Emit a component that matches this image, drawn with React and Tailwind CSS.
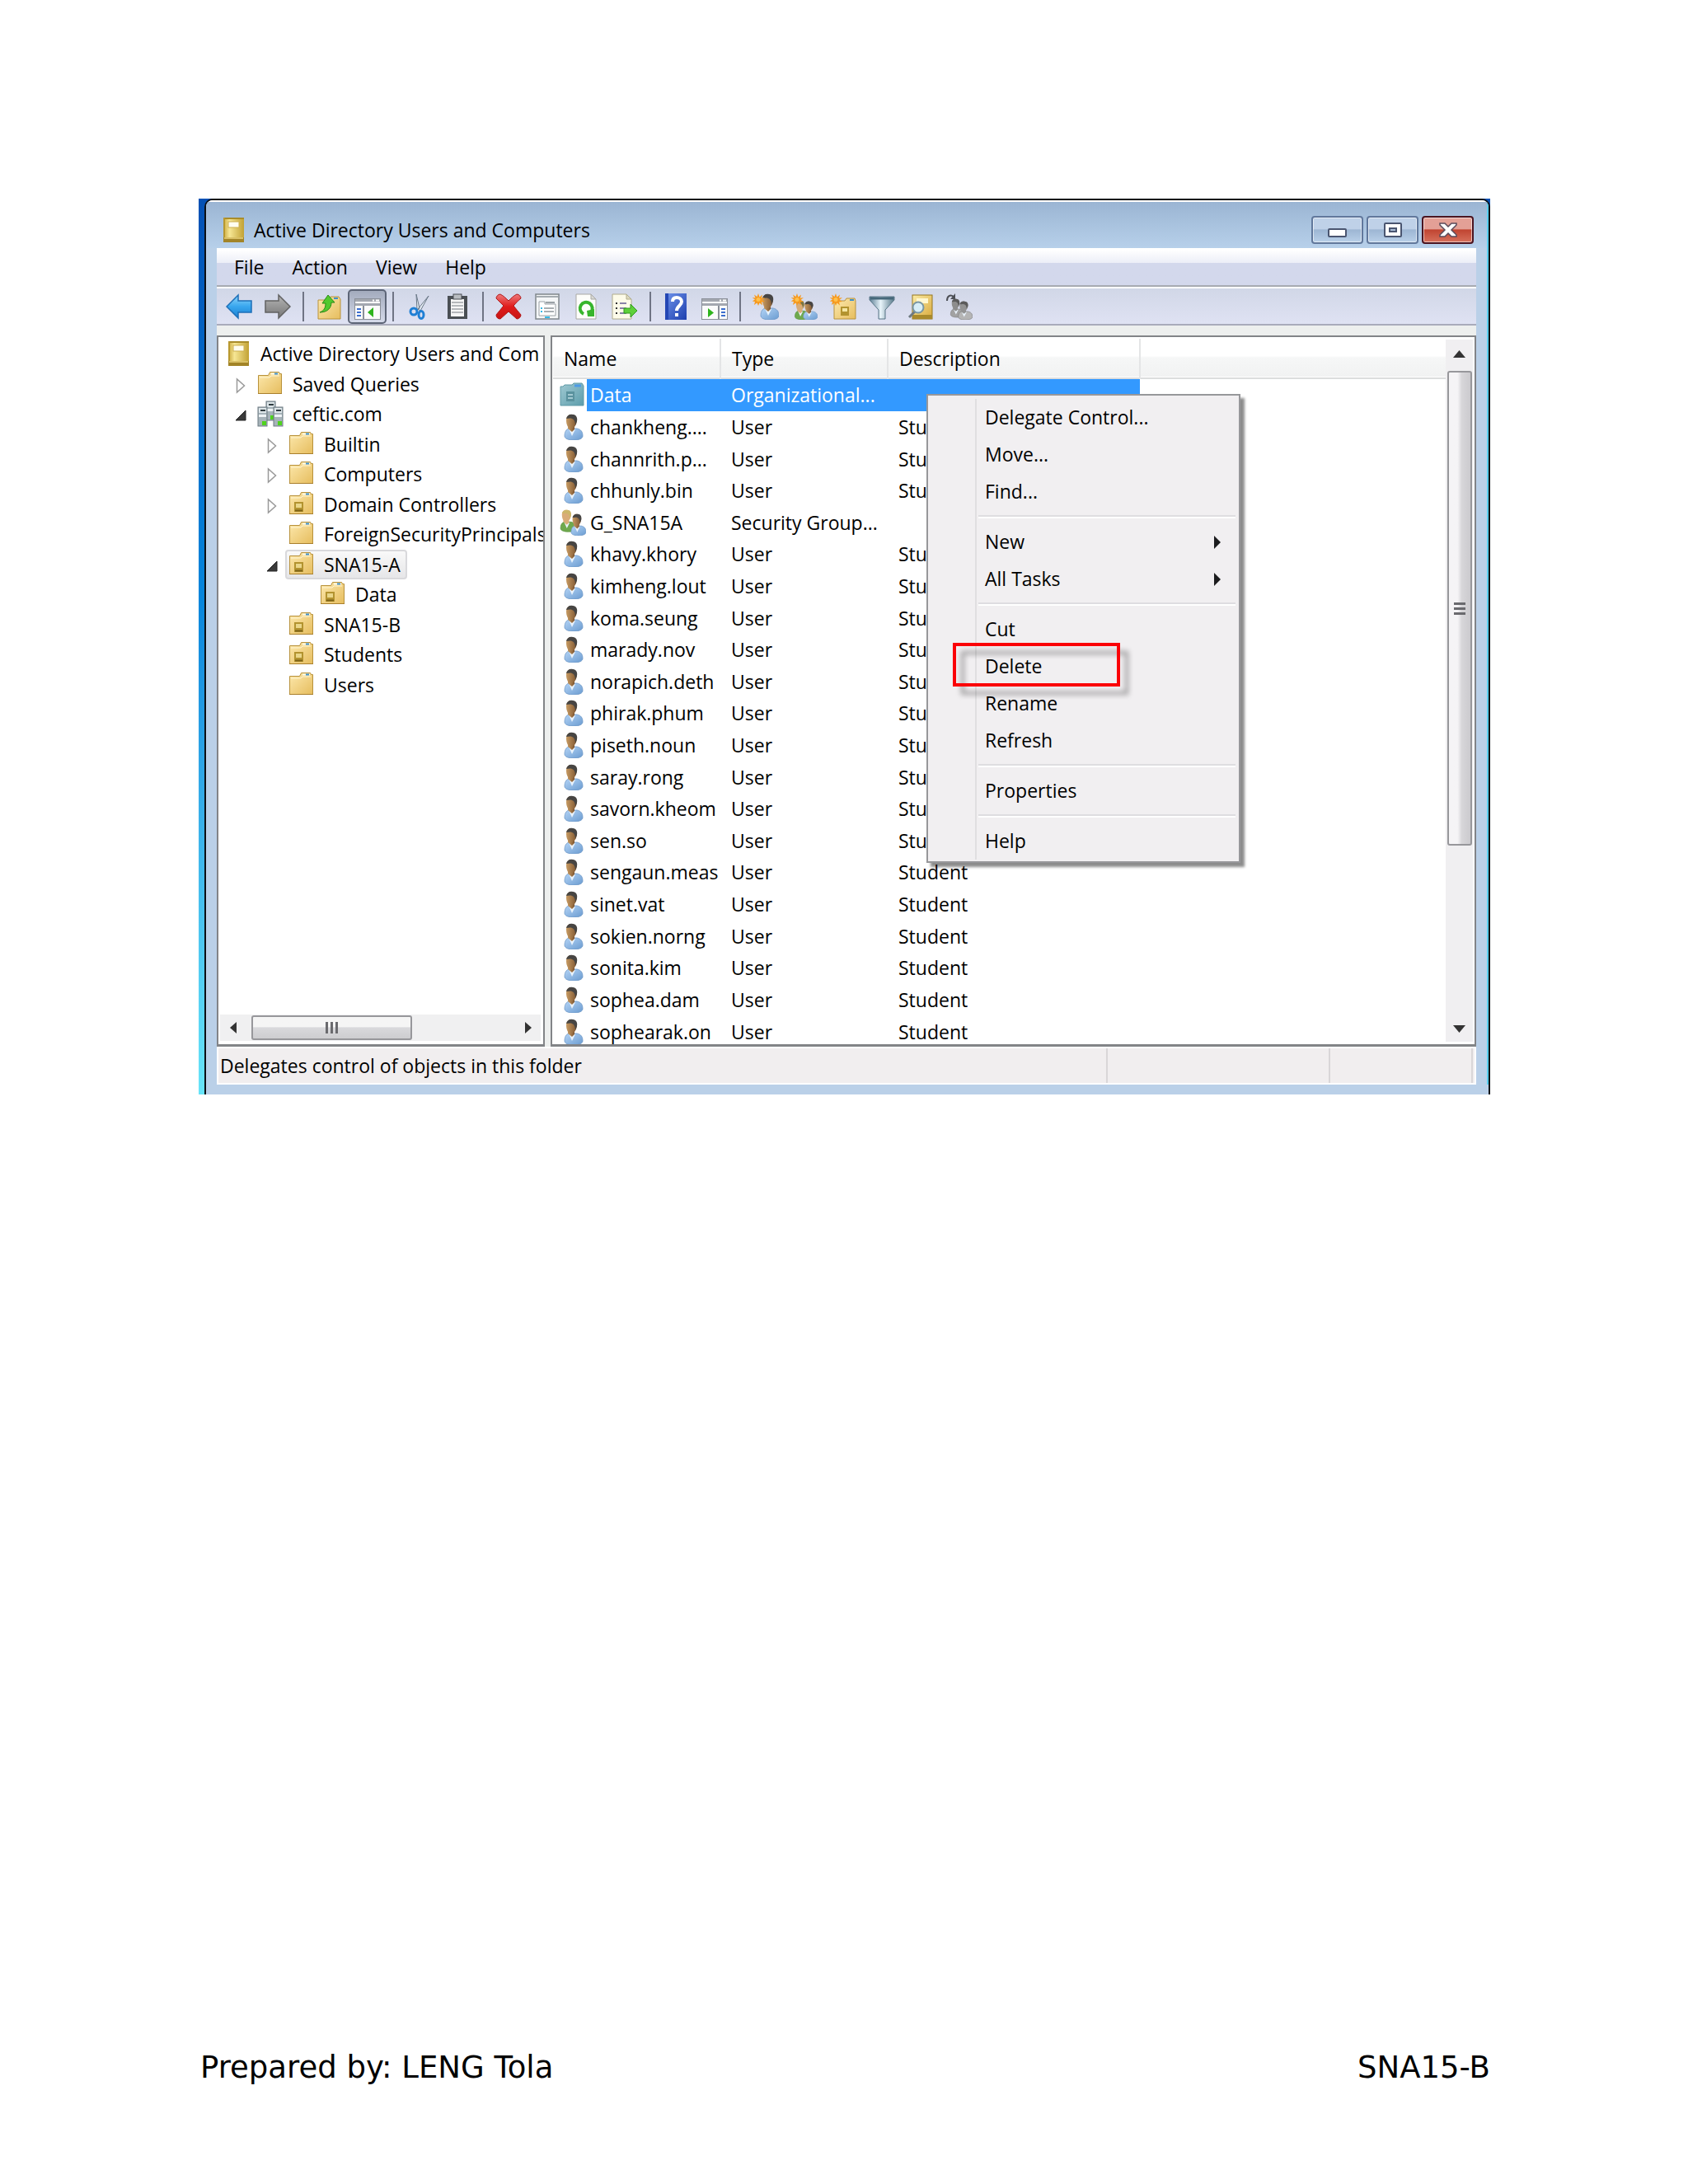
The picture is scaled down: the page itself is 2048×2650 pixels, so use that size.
import { useState } from "react";

const TREE = [
  { label: "Active Directory Users and Com", icon: "book", depth: 0 },
  { label: "Saved Queries", icon: "folder", depth: 1, toggle: "closed" },
  { label: "ceftic.com", icon: "domain", depth: 1, toggle: "open" },
  { label: "Builtin", icon: "folder", depth: 2, toggle: "closed" },
  { label: "Computers", icon: "folder", depth: 2, toggle: "closed" },
  { label: "Domain Controllers", icon: "unit", depth: 2, toggle: "closed" },
  { label: "ForeignSecurityPrincipals", icon: "folder", depth: 2 },
  { label: "SNA15-A", icon: "unit", depth: 2, toggle: "open" },
  { label: "Data", icon: "unit", depth: 3 },
  { label: "SNA15-B", icon: "unit", depth: 2 },
  { label: "Students", icon: "unit", depth: 2 },
  { label: "Users", icon: "folder", depth: 2 },
];

const INDENT = {
  0: "pl-2",
  1: "pl-2",
  2: "pl-[46px]",
  3: "pl-[84px]",
};

const USERS_BEFORE_GROUP = ["chankheng....", "channrith.p...", "chhunly.bin"];
const USERS_AFTER_GROUP = [
  "khavy.khory",
  "kimheng.lout",
  "koma.seung",
  "marady.nov",
  "norapich.deth",
  "phirak.phum",
  "piseth.noun",
  "saray.rong",
  "savorn.kheom",
  "sen.so",
  "sengaun.meas",
  "sinet.vat",
  "sokien.norng",
  "sonita.kim",
  "sophea.dam",
  "sophearak.on",
];

function toUser(name) {
  return { name, type: "User", description: "Student", icon: "user" };
}

const ROWS = [
  { name: "Data", type: "Organizational...", description: "", icon: "unitSelected" },
  ...USERS_BEFORE_GROUP.map(toUser),
  { name: "G_SNA15A", type: "Security Group...", description: "", icon: "group" },
  ...USERS_AFTER_GROUP.map(toUser),
];

const MENU_GROUPS = [
  [{ label: "Delegate Control..." }, { label: "Move..." }, { label: "Find..." }],
  [{ label: "New", submenu: true }, { label: "All Tasks", submenu: true }],
  [
    { label: "Cut" },
    { label: "Delete", marked: true },
    { label: "Rename" },
    { label: "Refresh" },
  ],
  [{ label: "Properties" }],
  [{ label: "Help" }],
];

const TOOL_GROUPS = [
  ["back", "forward"],
  ["up", "pane"],
  ["cut", "paste"],
  ["remove", "properties", "refresh", "export"],
  ["help", "actionPane"],
  ["newUser", "newGroup", "newUnit", "filter", "find", "addToGroup"],
];

const TOOL_LABELS = {
  back: "Back",
  forward: "Forward",
  up: "Up one level",
  pane: "Show or hide console tree",
  cut: "Cut",
  paste: "Paste",
  remove: "Delete",
  properties: "Properties",
  refresh: "Refresh",
  export: "Export list",
  help: "Help",
  actionPane: "Show or hide action pane",
  newUser: "Create a new user",
  newGroup: "Create a new group",
  newUnit: "Create a new organizational unit",
  filter: "Filter options",
  find: "Find objects",
  addToGroup: "Add to a group",
};

/* ---------- icon parts, all on a 32 x 32 grid ---------- */

function Defs() {
  return (
    <svg className="absolute size-0" aria-hidden="true">
      <defs>
        <linearGradient id="gold" x1="0" y1="0" x2="1" y2="1">
          <stop offset="0" stopColor="#fbeca6" />
          <stop offset="1" stopColor="#d9a93c" />
        </linearGradient>
        <linearGradient id="manila" x1="0" y1="0" x2="1" y2="1">
          <stop offset="0" stopColor="#fde9ae" />
          <stop offset="1" stopColor="#e6bd5e" />
        </linearGradient>
        <linearGradient id="bookBody" x1="0" y1="0" x2="1" y2="0">
          <stop offset="0" stopColor="#c9a83c" />
          <stop offset="0.3" stopColor="#f6e694" />
          <stop offset="1" stopColor="#c2a234" />
        </linearGradient>
        <linearGradient id="teal" x1="0" y1="0" x2="1" y2="1">
          <stop offset="0" stopColor="#a0c9d2" />
          <stop offset="1" stopColor="#5c9dab" />
        </linearGradient>
        <linearGradient id="skin" x1="0" y1="0" x2="1" y2="0">
          <stop offset="0" stopColor="#c79a62" />
          <stop offset="1" stopColor="#7d5530" />
        </linearGradient>
        <linearGradient id="shirt" x1="0" y1="0" x2="1" y2="1">
          <stop offset="0" stopColor="#b4d4f6" />
          <stop offset="1" stopColor="#6a9bd0" />
        </linearGradient>
        <linearGradient id="sky" x1="0" y1="0" x2="0" y2="1">
          <stop offset="0" stopColor="#8fd6fb" />
          <stop offset="0.5" stopColor="#38a6ee" />
          <stop offset="1" stopColor="#1b7fd0" />
        </linearGradient>
        <linearGradient id="steel" x1="0" y1="0" x2="0" y2="1">
          <stop offset="0" stopColor="#b5b5b5" />
          <stop offset="1" stopColor="#767676" />
        </linearGradient>
        <linearGradient id="cross" x1="0" y1="0" x2="0" y2="1">
          <stop offset="0" stopColor="#ee7a7a" />
          <stop offset="0.5" stopColor="#e01c1c" />
          <stop offset="1" stopColor="#c81414" />
        </linearGradient>
        <linearGradient id="funnel" x1="0" y1="0" x2="1" y2="0">
          <stop offset="0" stopColor="#5d7f95" />
          <stop offset="0.45" stopColor="#e8f4fa" />
          <stop offset="1" stopColor="#567889" />
        </linearGradient>
        <linearGradient id="helpBlue" x1="0" y1="0" x2="1" y2="1">
          <stop offset="0" stopColor="#6f93ea" />
          <stop offset="1" stopColor="#1d3fae" />
        </linearGradient>
      </defs>
    </svg>
  );
}

function Svg({ children, className = "size-8 shrink-0" }) {
  return (
    <svg viewBox="0 0 32 32" className={className} aria-hidden="true">
      {children}
    </svg>
  );
}

function BookShape() {
  return (
    <>
      <rect x="4" y="1" width="25" height="30" fill="url(#bookBody)" />
      <rect x="4" y="1" width="25" height="2" fill="#a98c2a" />
      <rect x="4" y="1" width="2" height="30" fill="#b8982f" />
      <rect x="10" y="6" width="13" height="7" fill="#fffdf0" stroke="#cdb050" />
      <rect x="4" y="25" width="25" height="6" fill="#a28427" />
      <rect x="5" y="25" width="23" height="2" fill="#d9c067" />
    </>
  );
}

function FolderShape() {
  return (
    <>
      <path d="M1.500 5.500h12l2-4h11l1 2h2v24h-28z" fill="url(#manila)" stroke="#b8923c" />
      <path d="M3 8h12l2-2h10" fill="none" stroke="#fff6d4" />
      <path d="M17 3.500h9" stroke="#fffbe8" strokeWidth="2" />
      <path d="M21 3.500h4" stroke="#3f90c8" strokeWidth="2" />
      <path d="M1 27.500h29" stroke="#a97f2c" />
    </>
  );
}

function UnitMark() {
  return (
    <>
      <rect x="7" y="13" width="11" height="12" fill="#b3932f" />
      <rect x="9" y="15" width="7" height="5" fill="#e9d68a" />
      <path d="M8 23.500h9" stroke="#7d6218" strokeWidth="2" />
    </>
  );
}

function PersonShape({
  shirt = "url(#shirt)",
  skin = "url(#skin)",
  hair = "#474543",
  edge = "#6f98c6",
}) {
  return (
    <>
      <path
        d="M6 27c0-5 2-8 5-9h10c5 1 7 4 7 9 0 3-4 5-11 5S6 30 6 27z"
        fill={shirt}
        stroke={edge}
        strokeWidth="0.8"
      />
      <path d="M11 18l4 9 4-8z" fill="#eaf3fc" />
      <path d="M10 14h8v5l-3 3-5-4z" fill={skin} />
      <path d="M8 8c0-4 2-7 6-7s7 3 7 7-3 10-7 10-6-5-6-10z" fill={skin} />
      <path d="M8 6c1-4 4-6 8-5 4 0 6 4 5 8l-2 5c0-4-1-7-4-8-2-1-5 0-7 0z" fill={hair} />
    </>
  );
}

function Burst() {
  return (
    <>
      <path
        d="M7 0l1.500 4.500L12 1.500l-1 4.300 4-.8-3.500 3L15 10l-4 .5 1 4-3.500-3L7 15l-1.500-3.500L2 14l1-4-3.500-.5L3 7.500-.5 5l4 .5L2 1.500 5.500 4z"
        fill="#f79a1e"
      />
      <circle cx="7" cy="7.500" r="2.500" fill="#ffc04a" />
    </>
  );
}

function ServerTower({ x, y }) {
  return (
    <g transform={`translate(${x} ${y})`}>
      <rect width="11" height="23" fill="#a6b3b9" stroke="#6d7b82" />
      <rect x="1" y="1" width="9" height="6" fill="#dde5e8" />
      <rect x="3" y="3" width="6" height="2" fill="#2f3b40" />
      <rect x="1" y="9" width="9" height="3" fill="#eef3f5" />
      <rect x="5" y="17" width="5" height="5" fill="#4fd31d" />
    </g>
  );
}

function PageShape() {
  return (
    <>
      <path d="M4 1h18l6 6v24H4z" fill="#fdfdfa" stroke="#a9a9a4" />
      <path d="M22 1v6h6z" fill="#d8d8d4" stroke="#a9a9a4" />
    </>
  );
}

function PaneWindow({ flip = false }) {
  return (
    <>
      <rect x="0.500" y="6.500" width="31" height="25" fill="#fbfbfb" stroke="#8a8f98" />
      <rect x="1" y="7" width="30" height="3" fill="#a4a8b0" />
      <path d="M22 8.500h2M26 8.500h4" stroke="#fff" strokeWidth="2" />
      <path d="M1 13.500h30" stroke="#a4a8b0" strokeWidth="3" />
      {flip ? (
        <>
          <path d="M21 15v16" stroke="#8a8f98" strokeWidth="2" />
          <path d="M24 19h5M24 23h5M24 27h5" stroke="#3c6ecf" strokeWidth="2" />
          <path d="M8 18v11l7-5.500z" fill="#2fb41d" />
        </>
      ) : (
        <>
          <path d="M11 15v16" stroke="#8a8f98" strokeWidth="2" />
          <path d="M3 19h5M3 23h5M3 27h5" stroke="#3c6ecf" strokeWidth="2" />
          <path d="M23 17v12l-7-6z" fill="#2fb41d" />
        </>
      )}
    </>
  );
}

const ICONS = {
  book: <BookShape />,
  folder: <FolderShape />,
  unit: (
    <>
      <FolderShape />
      <UnitMark />
    </>
  ),
  unitSelected: (
    <>
      <path d="M1 6h3l2-2h9l2-2h10l2 3v24H1z" fill="url(#teal)" stroke="#5e99a6" />
      <path d="M18 5h8" stroke="#4d9be6" strokeWidth="3" />
      <rect x="8" y="12" width="10" height="12" fill="#5a929e" />
      <path d="M10 16h6M10 20h6" stroke="#a3c9d1" strokeWidth="2" />
    </>
  ),
  domain: (
    <>
      <ServerTower x={11} y={1} />
      <ServerTower x={1} y={8} />
      <ServerTower x={20} y={8} />
    </>
  ),
  user: <PersonShape />,
  group: (
    <>
      <g transform="translate(-4 0) scale(0.850)">
        <PersonShape shirt="#6fa94e" skin="#d9ac78" hair="#cdb66a" edge="#55903a" />
      </g>
      <g transform="translate(9 5) scale(0.820 0.840)">
        <PersonShape />
      </g>
    </>
  ),
  back: (
    <path
      d="M1 16L15 2v7h16v14H15v7z"
      fill="url(#sky)"
      stroke="#1c6fb8"
      strokeWidth="1.500"
    />
  ),
  forward: (
    <path
      d="M31 16L17 2v7H1v14h16v7z"
      fill="url(#steel)"
      stroke="#626262"
      strokeWidth="1.500"
    />
  ),
  up: (
    <>
      <path d="M3 8h12l3-4h10l2 3v24H3z" fill="url(#manila)" stroke="#b8923c" />
      <path d="M22 6h5" stroke="#3f90c8" strokeWidth="2" />
      <path
        d="M5 23c5-2 7-5 7-11H8l7-10 8 9h-4c0 7-5 12-14 12z"
        fill="#52c92e"
        stroke="#2b8a17"
      />
    </>
  ),
  pane: <PaneWindow />,
  cut: (
    <>
      <path d="M13 1l4 17-3 2zM28 3L15 19l3 2z" fill="#e4ebf2" stroke="#6a7887" />
      <ellipse cx="10" cy="22" rx="4" ry="4" fill="none" stroke="#1f7fd4" strokeWidth="3" />
      <ellipse cx="19" cy="26" rx="3" ry="4.500" fill="none" stroke="#1f7fd4" strokeWidth="3" />
    </>
  ),
  paste: (
    <>
      <rect x="4" y="3" width="24" height="28" fill="#4a4f54" />
      <rect x="8" y="7" width="16" height="21" fill="#f6f6f6" />
      <rect x="11" y="1" width="10" height="6" fill="#b9bdc1" stroke="#4a4f54" />
      <path d="M9 11h14M9 15h14M9 19h14M9 23h14" stroke="#a0a4a8" strokeWidth="1.500" />
    </>
  ),
  remove: (
    <path
      d="M6 1c4 2 7 5 10 8 3-3 6-6 10-8 3 0 5 3 5 5-4 3-6 6-9 9 3 4 6 7 9 11 0 3-3 5-5 5-3-3-7-6-10-9-3 3-7 6-10 9-3 0-5-2-5-5 3-4 6-7 9-11-3-3-6-6-9-9 0-2 2-5 5-5z"
      fill="url(#cross)"
      stroke="#b01818"
    />
  ),
  properties: (
    <>
      <rect x="2" y="1" width="28" height="30" fill="#f4f6f7" stroke="#7f868b" strokeWidth="1.500" />
      <path d="M3 4h26" stroke="#a5abb0" strokeWidth="2" />
      <path d="M6 10h7v3h13v14H6z" fill="#fff" stroke="#9aa1a6" />
      <path d="M14 11h11" stroke="#9aa1a6" strokeWidth="2" />
      <path d="M12 18h12M12 22h12" stroke="#8c9499" strokeWidth="1.500" />
      <path d="M8 18h2M8 22h2" stroke="#35b9e6" strokeWidth="2" />
      <path d="M13 29h6" stroke="#35b9e6" strokeWidth="2" />
    </>
  ),
  refresh: (
    <>
      <PageShape />
      <path
        d="M13 25a7.500 7.500 0 1 1 9-2"
        fill="none"
        stroke="#37b52c"
        strokeWidth="4"
      />
      <path d="M17 21l9-2v9h-8z" fill="#37b52c" />
    </>
  ),
  export: (
    <>
      <path d="M1 1h17l6 6v24H1z" fill="#fdfbe9" stroke="#b0ac8c" />
      <path d="M18 1v6h6z" fill="#dedac0" stroke="#b0ac8c" />
      <path d="M5 12h2M5 18h2M5 24h2" stroke="#333" strokeWidth="2" />
      <path d="M10 12h8M10 18h8M10 24h8" stroke="#8a83a8" strokeWidth="2" />
      <path d="M15 18h8v-5l8 8-8 8v-5h-8z" fill="#5ed03a" stroke="#2f9a1d" />
    </>
  ),
  help: (
    <>
      <rect x="3" y="0" width="26" height="32" fill="url(#helpBlue)" />
      <rect x="3" y="0" width="4" height="32" fill="#2447b4" />
      <path
        d="M12 10c0-4 2-5 5-5s6 2 6 5c0 5-6 5-6 11"
        fill="none"
        stroke="#fff"
        strokeWidth="4"
      />
      <rect x="15" y="24" width="4" height="4" fill="#fff" />
    </>
  ),
  actionPane: <PaneWindow flip />,
  newUser: (
    <>
      <g transform="translate(4 0)">
        <PersonShape />
      </g>
      <Burst />
    </>
  ),
  newGroup: (
    <>
      <g transform="translate(0 8) scale(0.740)">
        <PersonShape shirt="#6fa94e" skin="#d9ac78" hair="#7d7442" edge="#55903a" />
      </g>
      <g transform="translate(10 9) scale(0.780 0.720)">
        <PersonShape />
      </g>
      <Burst />
    </>
  ),
  newUnit: (
    <>
      <path d="M5 9h13l2-3h10l1 3v22H5z" fill="url(#manila)" stroke="#b8923c" />
      <path d="M24 8h5" stroke="#3f90c8" strokeWidth="2" />
      <rect x="13" y="16" width="10" height="11" fill="#b3932f" />
      <rect x="15" y="18" width="6" height="4" fill="#f5e6a2" />
      <Burst />
    </>
  ),
  filter: (
    <>
      <path d="M1 4h30v4L20 20v11h-8V20L1 8z" fill="url(#funnel)" stroke="#587586" />
      <path d="M2 6h28" stroke="#46687a" strokeWidth="3" />
    </>
  ),
  find: (
    <>
      <rect x="6" y="2" width="24" height="29" fill="url(#gold)" stroke="#96761d" />
      <rect x="11" y="6" width="14" height="6" fill="#fff7cf" />
      <rect x="6" y="26" width="24" height="5" fill="#a98a2c" />
      <path d="M9 22l-7 7" stroke="#6f7a80" strokeWidth="3" />
      <circle cx="13" cy="17" r="6.500" fill="#d7eef7" stroke="#7a97a3" strokeWidth="2" />
    </>
  ),
  addToGroup: (
    <>
      <path d="M1 9c0-6 4-8 8-5" fill="none" stroke="#4c4f55" strokeWidth="2" />
      <path d="M11 0v7H5z" fill="#4c4f55" />
      <g transform="translate(1 6) scale(0.720)">
        <PersonShape shirt="#a2a2a2" skin="#8d8d8d" hair="#5b5b5b" edge="#7b7b7b" />
      </g>
      <g transform="translate(10 9) scale(0.780 0.720)">
        <PersonShape shirt="#b5b5b5" skin="#939393" hair="#5b5b5b" edge="#7b7b7b" />
      </g>
    </>
  ),
};

function Icon({ name, className }) {
  return <Svg className={className}>{ICONS[name]}</Svg>;
}

/* ---------- window chrome ---------- */

function CaptionButton({ label, tone, children }) {
  return (
    <button
      type="button"
      aria-label={label}
      className={`flex h-[34px] w-[63px] items-center justify-center rounded-[4px] border-2 inset-ring-1 inset-ring-white/60 ${tone}`}
    >
      {children}
    </button>
  );
}

const BLUE_TONE =
  "border-[#61789c] bg-linear-to-b from-[#bfd1e8] from-45% via-[#9db6d3] via-50% to-[#b9d0e9]";
const RED_TONE =
  "border-[#4b1420] bg-linear-to-b from-[#e3a096] from-45% via-[#c04431] via-50% to-[#d6705c]";

function TitleBar() {
  return (
    <header className="flex h-14 items-center bg-linear-to-b from-[#9bb5d3] to-[#b7d0ea] pt-[11px] pr-4 pl-[17px]">
      <Icon name="book" className="size-8" />
      <h1 className="ml-[9px] text-[23px] leading-8 whitespace-nowrap">
        Active Directory Users and Computers
      </h1>
      <div className="ml-auto flex gap-1">
        <CaptionButton label="Minimize" tone={BLUE_TONE}>
          <svg viewBox="0 0 24 20" className="h-5 w-6">
            <rect x="1" y="9" width="21" height="9" rx="1" fill="#fff" stroke="#4a5570" strokeWidth="2" />
          </svg>
        </CaptionButton>
        <CaptionButton label="Maximize" tone={BLUE_TONE}>
          <svg viewBox="0 0 24 20" className="h-5 w-6">
            <rect x="2" y="2" width="20" height="16" rx="1" fill="#fff" stroke="#4a5570" strokeWidth="2" />
            <rect x="8" y="8" width="8" height="4" fill="#a9bcd6" stroke="#4a5570" strokeWidth="2" />
          </svg>
        </CaptionButton>
        <CaptionButton label="Close" tone={RED_TONE}>
          <svg viewBox="0 0 24 20" className="h-5 w-6">
            <path
              d="M2 2h6l4 4 4-4h6v2l-6 6 6 6v2h-6l-4-4-4 4H2v-2l6-6-6-6z"
              fill="#fff"
              stroke="#5a4a5a"
              strokeWidth="1.500"
            />
          </svg>
        </CaptionButton>
      </div>
    </header>
  );
}

function MenuBar() {
  return (
    <nav className="flex h-[47px] items-center border-b-2 border-[#a7abb2] bg-linear-to-b from-white from-5% via-[#eceef7] via-40% to-[#d3d8ec] to-41% pl-1">
      {["File", "Action", "View", "Help"].map((item) => (
        <button key={item} type="button" className="px-[17px] text-[23px] leading-8">
          {item}
        </button>
      ))}
    </nav>
  );
}

function ToolBar() {
  return (
    <div
      role="toolbar"
      className="flex h-[47px] items-center border-t-2 border-b-2 border-t-white border-b-[#a9abbb] bg-linear-to-b from-[#d1d7e7] to-[#dfe2f3] pl-[3px]"
    >
      {TOOL_GROUPS.map((group, index) => (
        <div key={group[0]} className="flex items-center">
          {index > 0 && (
            <span className="flex w-[15px] justify-center">
              <span className="h-9 w-[2px] bg-[#6f7484]" />
            </span>
          )}
          {group.map((tool) => (
            <button
              key={tool}
              type="button"
              aria-label={TOOL_LABELS[tool]}
              className={
                tool === "pane"
                  ? "flex h-[42px] w-[47px] items-center justify-center rounded-[5px] border-2 border-[#5d6577] bg-linear-to-b from-[#a3abbd] to-[#d5daea]"
                  : "flex h-[42px] w-[47px] items-center justify-center"
              }
            >
              <Icon name={tool} className="size-8" />
            </button>
          ))}
        </div>
      ))}
    </div>
  );
}

/* ---------- console tree ---------- */

function TreeToggle({ state }) {
  return (
    <span className="flex h-full w-[39px] shrink-0 items-center pt-1 pl-[12px]">
      {state === "closed" && (
        <svg viewBox="0 0 14 20" className="h-5 w-[14px]">
          <path d="M2.500 2v16l9-8z" fill="#fff" stroke="#9a9a9a" strokeWidth="1.500" />
        </svg>
      )}
      {state === "open" && (
        <svg viewBox="0 0 14 14" className="size-[14px]">
          <path d="M13 1v12H1z" fill="#3a3a3a" stroke="#222" />
        </svg>
      )}
    </span>
  );
}

function ConsoleTree() {
  const [selected, setSelected] = useState("SNA15-A");

  return (
    <ul className="grid h-[438px] auto-rows-fr">
      {TREE.map((node) => {
        const isSelected = node.label === selected;

        return (
          <li
            key={`${node.depth}-${node.label}`}
            className={`flex min-h-0 min-w-0 items-center ${INDENT[node.depth]}`}
          >
            {node.depth > 0 && <TreeToggle state={node.toggle} />}
            <button
              type="button"
              onClick={() => setSelected(node.label)}
              className={`flex h-9 items-center gap-[11px] rounded-[4px] text-[23px] whitespace-nowrap ${
                isSelected
                  ? "-mx-1 border-2 border-[#d9d9dc] bg-linear-to-b from-[#f9f9f9] to-[#e6e6e8] pr-[6px] pl-[2px]"
                  : ""
              }`}
            >
              <Icon name={node.icon} className="size-8 shrink-0" />
              {node.label}
            </button>
          </li>
        );
      })}
    </ul>
  );
}

function HorizontalScroll() {
  return (
    <div className="mr-[3px] mb-1 ml-[2px] flex h-8 items-center bg-[#f0f0f1]">
      <svg viewBox="0 0 38 32" className="h-8 w-[38px]">
        <path d="M20 9v14l-8-7z" fill="#333" />
      </svg>
      <div className="flex h-[30px] w-1/2 items-center justify-center gap-[3px] rounded-[3px] border-2 border-[#97979b] bg-linear-to-b from-[#f5f5f5] from-45% via-[#d9d9dc] via-50% to-[#cdcdd0]">
        <span className="h-[14px] w-[3px] bg-[#6a6a6e]" />
        <span className="h-[14px] w-[3px] bg-[#6a6a6e]" />
        <span className="h-[14px] w-[3px] bg-[#6a6a6e]" />
      </div>
      <svg viewBox="0 0 38 32" className="ml-auto h-8 w-[38px]">
        <path d="M19 9v14l8-7z" fill="#333" />
      </svg>
    </div>
  );
}

function VerticalScroll() {
  return (
    <div className="my-[3px] mr-[2px] flex w-[33px] shrink-0 flex-col items-center bg-[#f0eff1]">
      <svg viewBox="0 0 33 38" className="h-[38px] w-[33px] shrink-0">
        <path d="M9 22h15l-7.500-9z" fill="#333" />
      </svg>
      <div className="flex h-[576px] w-[30px] flex-col items-center justify-center gap-[3px] rounded-[3px] border-2 border-[#97979b] bg-linear-to-r from-[#f5f4f6] from-40% via-[#d7d6d9] via-60% to-[#cbcace]">
        <span className="h-[3px] w-[14px] bg-[#6a6a6e]" />
        <span className="h-[3px] w-[14px] bg-[#6a6a6e]" />
        <span className="h-[3px] w-[14px] bg-[#6a6a6e]" />
      </div>
      <svg viewBox="0 0 33 38" className="mt-auto h-[38px] w-[33px] shrink-0">
        <path d="M9 18h15l-7.500 9z" fill="#333" />
      </svg>
    </div>
  );
}

/* ---------- object list ---------- */

function ObjectTable() {
  return (
    <table className="h-[860px] w-full table-fixed border-collapse text-left text-[23px] leading-8 whitespace-nowrap">
      <colgroup>
        <col className="w-[41px]" />
        <col className="w-[162px]" />
        <col className="w-[203px]" />
        <col className="w-[306px]" />
        <col />
      </colgroup>
      <thead>
        <tr className="h-12 border-b-2 border-[#dcdddd] bg-linear-to-b from-white from-45% via-[#f6f7f7] via-50% to-[#f1f2f2]">
          <th colSpan={2} className="border-r-2 border-[#e4e5e6] pl-[13px] font-normal">
            Name
          </th>
          <th className="border-r-2 border-[#e4e5e6] pl-[13px] font-normal">Type</th>
          <th className="border-r-2 border-[#e4e5e6] pl-[13px] font-normal">Description</th>
          <td />
        </tr>
      </thead>
      <tbody>
        {ROWS.map((row, index) => {
          const tone = index === 0 ? "bg-[#3399ff] text-white" : "";

          return (
            <tr key={row.name}>
              <td className="p-0 pl-2">
                <Icon name={row.icon} className="block size-8" />
              </td>
              <td className={`p-0 pl-1 ${tone}`}>{row.name}</td>
              <td className={`p-0 pl-[13px] ${tone}`}>{row.type}</td>
              <td className={`p-0 pl-[13px] ${tone}`}>{row.description}</td>
              <td className="p-0" />
            </tr>
          );
        })}
      </tbody>
    </table>
  );
}

function ContextMenu() {
  return (
    <div
      role="menu"
      className="absolute top-[71px] left-[456px] w-[381px] border-2 border-[#97979a] bg-[#f1eff1] pt-1 pb-[2px] shadow-[5px_5px_3px_rgba(0,0,0,0.45)]"
    >
      <div className="ml-[57px] border-l-2 border-[#e0dfe1]">
        {MENU_GROUPS.map((group, index) => (
          <div key={group[0].label}>
            {index > 0 && (
              <div className="flex h-4 items-center pr-1 pl-[2px]">
                <span className="h-[4px] w-full border-t-2 border-b-2 border-t-[#dedde0] border-b-white" />
              </div>
            )}
            {group.map((item) => (
              <button
                key={item.label}
                type="button"
                role="menuitem"
                className="relative flex h-[45px] w-full items-center pr-[21px] pl-[10px] text-[23px]"
              >
                {item.label}
                {item.submenu && (
                  <svg viewBox="0 0 10 16" className="ml-auto h-4 w-[10px]">
                    <path d="M1 0v16l8-8z" fill="#1c1c1e" />
                  </svg>
                )}
                {item.marked && (
                  <span className="absolute top-[-6px] left-[-29px] h-[53px] w-[203px] border-4 border-[#fb0007] drop-shadow-[10px_10px_3px_rgba(0,0,0,0.35)]" />
                )}
              </button>
            ))}
          </div>
        ))}
      </div>
    </div>
  );
}

function StatusBar() {
  return (
    <footer className="flex h-[46px] items-center border-2 border-white bg-[#f1eeef] pl-[2px] text-[23px]">
      <p className="flex-1">Delegates control of objects in this folder</p>
      <span className="h-full w-[270px] border-l-2 border-[#d9d6d8]" />
      <span className="mr-[2px] h-full w-[175px] border-x-2 border-[#d9d6d8]" />
    </footer>
  );
}

function ConsoleWindow() {
  return (
    <section className="bg-linear-to-b from-[#0450b4] via-[#0786dc] via-45% to-[#68e4f8] pl-[7px]">
      <div className="overflow-hidden rounded-t-[10px] border-t-2 border-r-2 border-l-2 border-[#0b0f14] bg-[#bad0e8]">
        <div className="border-t-2 border-r-2 border-t-white border-r-[#58cdee]">
          <TitleBar />
          <div className="mr-[13px] mb-[12px] ml-[13px] bg-[#edefee]">
            <MenuBar />
            <ToolBar />
            <div className="mt-3 flex gap-[7px]">
              <div className="flex w-[398px] shrink-0 flex-col overflow-hidden border-2 border-b-[3px] border-[#828487] bg-white pt-[2px]">
                <ConsoleTree />
                <div className="mt-auto">
                  <HorizontalScroll />
                </div>
              </div>
              <div className="relative min-w-0 flex-1">
                <div className="flex h-[863px] overflow-hidden border-2 border-b-[3px] border-[#828487] bg-white">
                  <div className="min-w-0 flex-1 pt-[2px] pl-[1px]">
                    <ObjectTable />
                  </div>
                  <VerticalScroll />
                </div>
                <ContextMenu />
              </div>
            </div>
            <StatusBar />
          </div>
        </div>
      </div>
    </section>
  );
}

export default function App() {
  return (
    <main className="flex min-h-screen flex-col bg-white pt-[241px] pr-[240px] pb-[119px] pl-[241px] font-['Open_Sans','Noto_Sans',sans-serif] text-black">
      <Defs />
      <ConsoleWindow />
      <div className="mt-auto flex justify-between pl-[2px] font-['DejaVu_Sans',sans-serif] text-[37px] leading-[44px]">
        <p>Prepared by: LENG Tola</p>
        <p>SNA15-B</p>
      </div>
    </main>
  );
}
